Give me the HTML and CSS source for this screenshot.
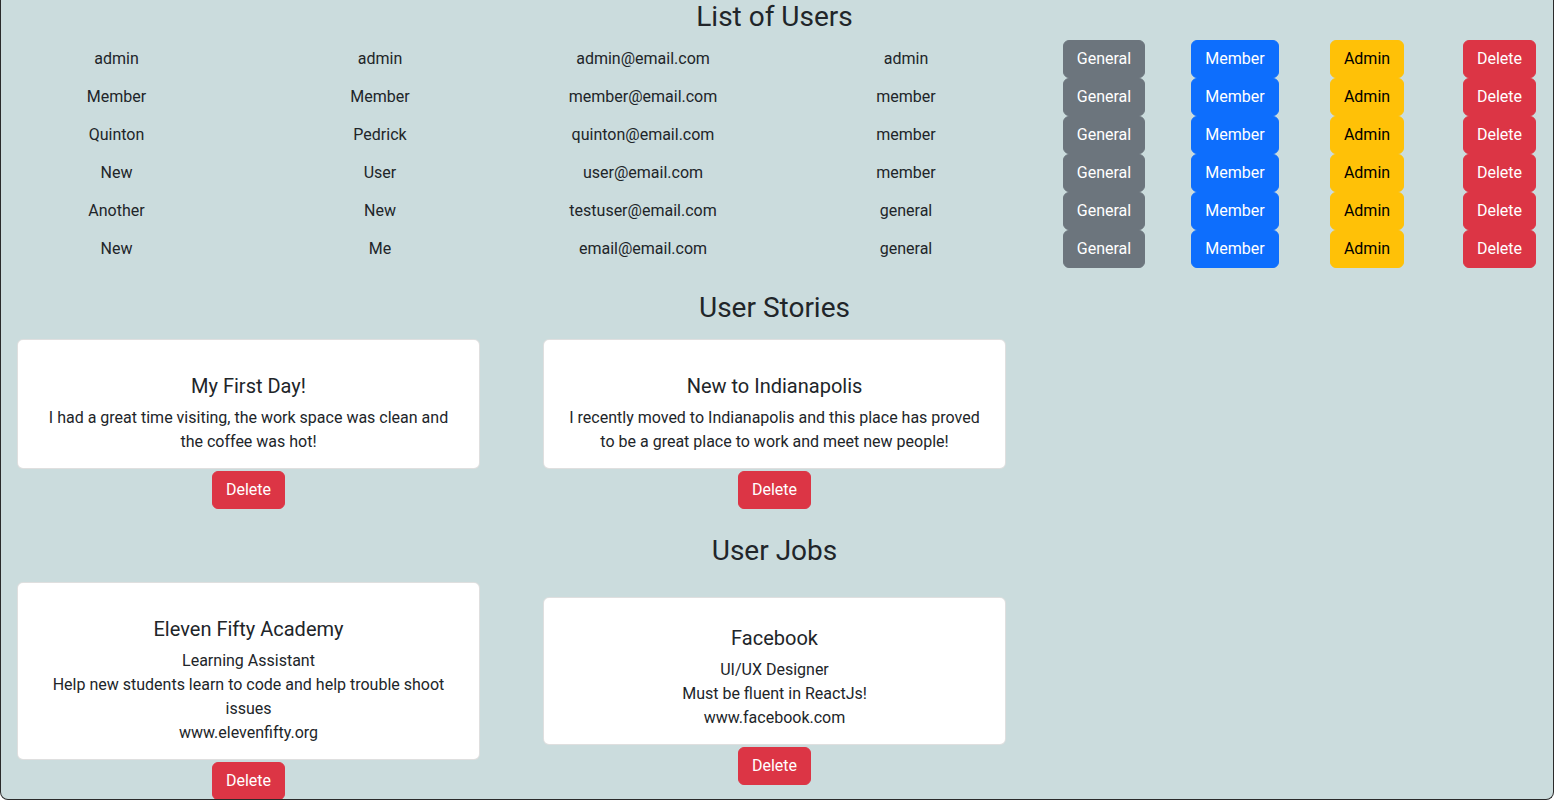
FILE: index.html
```html
<!DOCTYPE html>
<html lang="en">
<head>
<meta charset="utf-8">
<title>Admin</title>
<link rel="stylesheet" href="styles.css">
</head>
<body>
<div class="page">
  <h4 class="heading heading-first">List of Users</h4>
  <div class="users">
    <div class="user-row">
      <span class="cell">admin</span><span class="cell">admin</span><span class="cell">admin@email.com</span><span class="cell">admin</span>
      <span class="cell"><button class="btn btn-secondary">General</button></span>
      <span class="cell"><button class="btn btn-primary">Member</button></span>
      <span class="cell"><button class="btn btn-warning">Admin</button></span>
      <span class="cell cell-end"><button class="btn btn-danger">Delete</button></span>
    </div>
    <div class="user-row">
      <span class="cell">Member</span><span class="cell">Member</span><span class="cell">member@email.com</span><span class="cell">member</span>
      <span class="cell"><button class="btn btn-secondary">General</button></span>
      <span class="cell"><button class="btn btn-primary">Member</button></span>
      <span class="cell"><button class="btn btn-warning">Admin</button></span>
      <span class="cell cell-end"><button class="btn btn-danger">Delete</button></span>
    </div>
    <div class="user-row">
      <span class="cell">Quinton</span><span class="cell">Pedrick</span><span class="cell">quinton@email.com</span><span class="cell">member</span>
      <span class="cell"><button class="btn btn-secondary">General</button></span>
      <span class="cell"><button class="btn btn-primary">Member</button></span>
      <span class="cell"><button class="btn btn-warning">Admin</button></span>
      <span class="cell cell-end"><button class="btn btn-danger">Delete</button></span>
    </div>
    <div class="user-row">
      <span class="cell">New</span><span class="cell">User</span><span class="cell">user@email.com</span><span class="cell">member</span>
      <span class="cell"><button class="btn btn-secondary">General</button></span>
      <span class="cell"><button class="btn btn-primary">Member</button></span>
      <span class="cell"><button class="btn btn-warning">Admin</button></span>
      <span class="cell cell-end"><button class="btn btn-danger">Delete</button></span>
    </div>
    <div class="user-row">
      <span class="cell">Another</span><span class="cell">New</span><span class="cell">testuser@email.com</span><span class="cell">general</span>
      <span class="cell"><button class="btn btn-secondary">General</button></span>
      <span class="cell"><button class="btn btn-primary">Member</button></span>
      <span class="cell"><button class="btn btn-warning">Admin</button></span>
      <span class="cell cell-end"><button class="btn btn-danger">Delete</button></span>
    </div>
    <div class="user-row">
      <span class="cell">New</span><span class="cell">Me</span><span class="cell">email@email.com</span><span class="cell">general</span>
      <span class="cell"><button class="btn btn-secondary">General</button></span>
      <span class="cell"><button class="btn btn-primary">Member</button></span>
      <span class="cell"><button class="btn btn-warning">Admin</button></span>
      <span class="cell cell-end"><button class="btn btn-danger">Delete</button></span>
    </div>
  </div>

  <h4 class="heading heading-stories">User Stories</h4>
  <div class="card-row">
    <div class="card-group">
      <div class="card">
        <h5 class="card-title">My First Day!</h5>
        <p class="card-text">I had a great time visiting, the work space was clean and the coffee was hot!</p>
      </div>
      <button class="btn btn-danger">Delete</button>
    </div>
    <div class="card-group">
      <div class="card">
        <h5 class="card-title">New to Indianapolis</h5>
        <p class="card-text">I recently moved to Indianapolis and this place has proved to be a great place to work and meet new people!</p>
      </div>
      <button class="btn btn-danger">Delete</button>
    </div>
  </div>

  <h4 class="heading heading-jobs">User Jobs</h4>
  <div class="card-row">
    <div class="card-group">
      <div class="card">
        <h5 class="card-title">Eleven Fifty Academy</h5>
        <p class="card-text">Learning Assistant</p>
        <p class="card-text">Help new students learn to code and help trouble shoot issues</p>
        <p class="card-text">www.elevenfifty.org</p>
      </div>
      <button class="btn btn-danger">Delete</button>
    </div>
    <div class="card-group">
      <div class="card card-tight">
        <h5 class="card-title">Facebook</h5>
        <p class="card-text">UI/UX Designer</p>
        <p class="card-text">Must be fluent in ReactJs!</p>
        <p class="card-text">www.facebook.com</p>
      </div>
      <button class="btn btn-danger">Delete</button>
    </div>
  </div>
</div>
</body>
</html>
```

FILE: styles.css
```css
* { box-sizing: border-box; }
html, body { margin: 0; padding: 0; }
body {
  font-family: Roboto, "Liberation Sans", sans-serif;
  font-size: 16px;
  line-height: 24px;
  color: #212529;
  background: #ffffff;
}
.page {
  height: 800px;
  background: #cbdcdd;
  border: 1px solid #2a2a2a;
  border-top: 0;
  border-radius: 0 0 8px 8px;
  overflow: hidden;
}
.heading {
  margin: 0;
  padding-right: 5px;
  font-size: 28px;
  line-height: 33px;
  font-weight: 400;
  text-align: center;
}
.heading-first { margin-top: 0; margin-bottom: 7px; }
.heading-stories { margin-top: 23px; margin-bottom: 15px; }
.heading-jobs { margin-top: 25px; margin-bottom: 15px; }

.users { display: flex; flex-direction: column; }
.user-row {
  display: grid;
  grid-template-columns: 231px 296px 230px 296px 100px 162px 102px 1fr;
  height: 38px;
  align-items: center;
}
.cell { display: flex; justify-content: center; align-items: center; }
.cell-end { justify-content: flex-end; padding-right: 17px; }

.btn {
  font-family: inherit;
  font-size: 16px;
  line-height: 24px;
  padding: 6px 13px;
  border: 1px solid transparent;
  border-radius: 6px;
  color: #fff;
  cursor: pointer;
}
.btn-secondary { background: #6c757d; border-color: #6c757d; }
.btn-primary { background: #0d6efd; border-color: #0d6efd; }
.btn-warning { background: #ffc107; border-color: #ffc107; color: #000; }
.btn-danger { background: #dc3545; border-color: #dc3545; }

.card-row {
  display: flex;
  align-items: center;
  gap: 63px;
  padding-left: 16px;
}
.card-group {
  display: flex;
  flex-direction: column;
  align-items: center;
  gap: 2px;
  width: 463px;
}
.card {
  width: 100%;
  background: #fff;
  border: 1px solid rgba(0, 0, 0, 0.125);
  border-radius: 6px;
  padding: 34px 22px 14px;
  text-align: center;
}
.card-tight { padding-top: 28px; }
.card-title {
  margin: 0 0 8px;
  font-size: 20px;
  line-height: 24px;
  font-weight: 400;
}
.card-text { margin: 0; }
```
